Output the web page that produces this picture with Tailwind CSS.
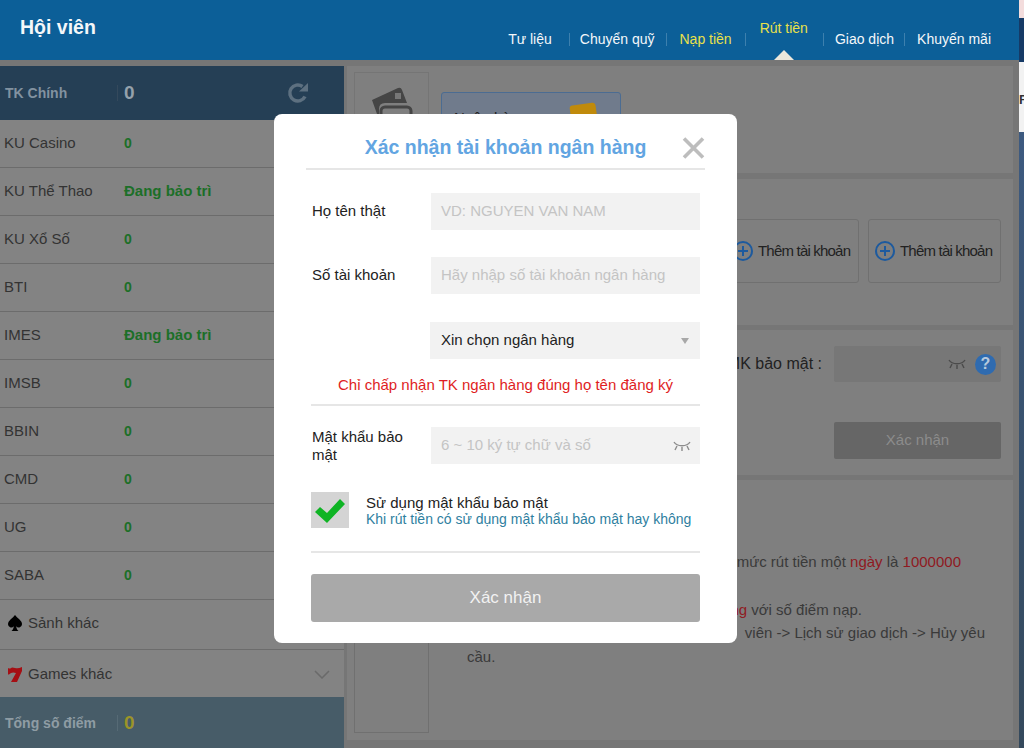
<!DOCTYPE html>
<html lang="vi">
<head>
<meta charset="utf-8">
<title>Hội viên</title>
<script src="https://cdn.jsdelivr.net/npm/@tailwindcss/browser@4"></script>
</head>
<body class="m-0 overflow-hidden">
<div class="relative flex h-[748px] w-[1024px] overflow-hidden bg-[#767676] font-['Liberation_Sans',Arial,sans-serif] text-[15px] text-[#333333]">
  <!-- page -->
  <div class="flex w-[1019px] shrink-0 flex-col">
    <header class="flex h-[60px] shrink-0 bg-[#0c5f98] text-[#f4f7fa]">
      <div class="pl-[20px] pt-[15px] text-[19.5px] font-bold leading-[24px]">Hội viên</div>
      <nav class="relative ml-auto flex h-full items-start pr-[28px] text-[14px] leading-[20px]">
        <div class="mt-[29px] flex items-center">
          <span>Tư liệu</span><i class="ml-[17px] mr-[10px] block h-[13px] w-px bg-[#3d80ae]"></i>
          <span>Chuyển quỹ</span><i class="ml-[11px] mr-[13px] block h-[13px] w-px bg-[#3d80ae]"></i>
          <span class="text-[#e9e04a]">Nạp tiền</span><i class="ml-[13px] mr-[14px] block h-[13px] w-px bg-[#3d80ae]"></i>
          <span class="relative -top-[11px] text-[#e9e04a]">Rút tiền</span><i class="ml-[15px] mr-[11px] block h-[13px] w-px bg-[#3d80ae]"></i>
          <span>Giao dịch</span><i class="ml-[10px] mr-[12px] block h-[13px] w-px bg-[#3d80ae]"></i>
          <span>Khuyến mãi</span>
        </div>
        <i class="absolute bottom-0 right-[225px] block h-0 w-0 border-x-[10px] border-b-[10px] border-x-transparent border-b-[#ece8dc]"></i>
      </nav>
    </header>
    <div class="flex min-h-0 flex-1 pt-[6px]">
      <!-- sidebar -->
      <aside class="flex w-[344px] shrink-0 flex-col bg-[#838383]">
        <div class="grid h-[54px] grid-cols-[112px_1px_1fr_auto] items-center bg-[#253f55] pl-[5px] pr-[35px]">
          <span class="text-[14px] font-bold text-[#8292a0]">TK Chính</span>
          <i class="h-[16px] w-px bg-[#34495c]"></i>
          <span class="pl-[6px] text-[19px] font-bold text-[#95a1ab]">0</span>
          <svg width="22" height="22" viewBox="0 0 22 22" fill="none" stroke="#5d7080" stroke-width="3.500" aria-hidden="true"><path d="M18 14.500A8 8 0 1 1 15.500 4.500"/><path d="M12 9.500h9V1z" fill="#5d7080" stroke="none"/></svg>
        </div>
        <div class="grid h-[48px] grid-cols-[120px_1fr] items-center border-b border-[#6c6c6c] pl-[4px]"><span>KU Casino</span><b class="text-[14px] text-[#1c6f28]">0</b></div>
        <div class="grid h-[48px] grid-cols-[120px_1fr] items-center border-b border-[#6c6c6c] pl-[4px]"><span>KU Thể Thao</span><b class="text-[15px] text-[#1c6f28]">Đang bảo trì</b></div>
        <div class="grid h-[48px] grid-cols-[120px_1fr] items-center border-b border-[#6c6c6c] pl-[4px]"><span>KU Xổ Số</span><b class="text-[14px] text-[#1c6f28]">0</b></div>
        <div class="grid h-[48px] grid-cols-[120px_1fr] items-center border-b border-[#6c6c6c] pl-[4px]"><span>BTI</span><b class="text-[14px] text-[#1c6f28]">0</b></div>
        <div class="grid h-[48px] grid-cols-[120px_1fr] items-center border-b border-[#6c6c6c] pl-[4px]"><span>IMES</span><b class="text-[15px] text-[#1c6f28]">Đang bảo trì</b></div>
        <div class="grid h-[48px] grid-cols-[120px_1fr] items-center border-b border-[#6c6c6c] pl-[4px]"><span>IMSB</span><b class="text-[14px] text-[#1c6f28]">0</b></div>
        <div class="grid h-[48px] grid-cols-[120px_1fr] items-center border-b border-[#6c6c6c] pl-[4px]"><span>BBIN</span><b class="text-[14px] text-[#1c6f28]">0</b></div>
        <div class="grid h-[48px] grid-cols-[120px_1fr] items-center border-b border-[#6c6c6c] pl-[4px]"><span>CMD</span><b class="text-[14px] text-[#1c6f28]">0</b></div>
        <div class="grid h-[48px] grid-cols-[120px_1fr] items-center border-b border-[#6c6c6c] pl-[4px]"><span>UG</span><b class="text-[14px] text-[#1c6f28]">0</b></div>
        <div class="grid h-[48px] grid-cols-[120px_1fr] items-center border-b border-[#6c6c6c] pl-[4px]"><span>SABA</span><b class="text-[14px] text-[#1c6f28]">0</b></div>
        <div class="flex h-[50px] items-center gap-[6px] border-b border-[#6c6c6c] pb-[3px] pl-[8px]">
          <svg width="14" height="16" viewBox="0 0 14 16" fill="#000" aria-hidden="true"><path d="M7 0C9 3 14 5.500 14 9a3.300 3.300 0 0 1-5.800 2.200C8.300 13 9 14.500 10.500 16h-7C5 14.500 5.700 13 5.800 11.200A3.300 3.300 0 0 1 0 9C0 5.500 5 3 7 0z"/></svg>
          <span>Sảnh khác</span>
        </div>
        <div class="flex h-[47px] items-center gap-[6px] pl-[8px] pr-[14px] pt-[2px]">
          <svg width="14" height="15" viewBox="0 0 14 15" fill="#a50f14" aria-hidden="true"><path d="M0 1q2 1 3 0t4 0 7-1v4L9 15H3l5-9Q5 5 3 6L1 7.500H0z"/></svg>
          <span>Games khác</span>
          <svg class="ml-auto" width="16" height="9" viewBox="0 0 16 9" fill="none" stroke="#6a6a6a" stroke-width="1.500" aria-hidden="true"><path d="M1 1l7 7 7-7"/></svg>
        </div>
        <div class="grid flex-1 grid-cols-[112px_1px_1fr] items-center bg-[#475c68] pl-[5px] pt-[1px]">
          <span class="text-[14px] font-bold text-[#8f9ca4]">Tổng số điểm</span>
          <i class="h-[16px] w-px bg-[#566a75]"></i>
          <span class="pl-[6px] text-[19px] font-bold text-[#9c9428]">0</span>
        </div>
      </aside>
      <!-- main -->
      <main class="ml-[3px] flex w-[666px] shrink-0 flex-col pb-[8px]">
        <section class="flex h-[107px] shrink-0 gap-[12px] bg-[#7f7f7f] pl-[7px] pt-[6px]">
          <div class="flex h-[95px] w-[75px] items-start justify-center border border-[#757575] pt-[14px]">
            <svg width="42" height="40" viewBox="0 0 42 40" aria-hidden="true"><path d="M1 13L27 1q3-1 4 2l5 13H14q-6 0-6 6v6L6 27z" fill="#454545"/><rect x="24" y="6" width="6" height="6" fill="#777"/><rect x="10" y="20" width="30" height="18" rx="4" fill="none" stroke="#454545" stroke-width="3"/></svg>
          </div>
          <div class="relative mt-[20px] h-[60px] w-[180px] overflow-hidden rounded-[3px] border border-[#4b6c92] bg-[#707b8c] pl-[12px] pt-[14px] text-[#222]">
            Ngân hàng
            <i class="absolute left-[130px] top-[11px] block h-[40px] w-[26px] rotate-[-8deg] rounded-[3px] bg-[#c08a0b]"></i>
          </div>
        </section>
        <section class="mt-[6px] flex h-[146px] shrink-0 justify-end gap-[9px] bg-[#7f7f7f] pr-[12px] pt-[40px]">
          <div class="flex h-[64px] w-[133px] items-center gap-[5px] rounded-[3px] border border-[#707070] pl-[6px] text-[15px] tracking-[-0.8px] text-[#222]">
            <svg width="20" height="20" viewBox="0 0 20 20" fill="none" stroke="#1d5a9e" stroke-width="2" aria-hidden="true"><circle cx="10" cy="10" r="9"/><path d="M10 5v10M5 10h10"/></svg>
            <span>Thêm tài khoản</span>
          </div>
          <div class="flex h-[64px] w-[133px] items-center gap-[5px] rounded-[3px] border border-[#707070] pl-[6px] text-[15px] tracking-[-0.8px] text-[#222]">
            <svg width="20" height="20" viewBox="0 0 20 20" fill="none" stroke="#1d5a9e" stroke-width="2" aria-hidden="true"><circle cx="10" cy="10" r="9"/><path d="M10 5v10M5 10h10"/></svg>
            <span>Thêm tài khoản</span>
          </div>
        </section>
        <section class="mt-[5px] flex h-[145px] shrink-0 flex-col items-end bg-[#7f7f7f] pr-[12px] pt-[16px]">
          <div class="flex items-center gap-[12px]">
            <span class="text-[16px] text-[#222]">MK bảo mật :</span>
            <div class="flex h-[36px] w-[167px] items-center justify-end gap-[9px] rounded-[2px] bg-[#777777] pr-[5px]">
              <svg width="18" height="12" viewBox="0 0 18 12" fill="none" stroke="#4b4b4b" stroke-width="1.400" aria-hidden="true"><path d="M1 2c3 5 13 5 16 0M9 7v4M4 6l-2 4M14 6l2 4"/></svg>
              <span class="flex h-[21px] w-[21px] items-center justify-center rounded-full bg-[#2f6bb0] text-[16px] font-bold leading-none text-[#b8c9dc]">?</span>
            </div>
          </div>
          <div class="mt-[40px] flex h-[37px] w-[167px] items-center justify-center rounded-[2px] bg-[#666666] text-[#8c8c8c]">Xác nhận</div>
        </section>
        <section class="relative mt-[5px] flex min-h-0 flex-1 bg-[#7f7f7f] pl-[7px] pt-[7px] text-[15px] leading-[24px] text-[#3a3a3a]">
          <div class="h-[246px] w-[75px] shrink-0 border border-[#707070]"></div>
          <div class="absolute right-[52px] top-[70px] whitespace-nowrap text-right">Hạn mức rút tiền một <span class="text-[#8f1a22]">ngày</span> là <span class="text-[#8f1a22]">1000000</span></div>
          <div class="absolute right-[151px] top-[118px] whitespace-nowrap text-right"><span class="text-[#8f1a22]">Đúng</span> với số điểm nạp.</div>
          <div class="absolute right-[28px] top-[141px] whitespace-nowrap text-right">Hội&nbsp;&nbsp;viên -&gt; Lịch sử giao dịch -&gt; Hủy yêu</div>
          <div class="absolute left-[120px] top-[165px]">cầu.</div>
        </section>
      </main>
    </div>
  </div>
  <!-- neighbouring window strip -->
  <div class="flex flex-1 flex-col">
    <div class="h-[18px] bg-[#f3dcdc]"></div>
    <div class="h-[44px] bg-[#163a66]"></div>
    <div class="h-[70px] bg-[#f2f2f2] pt-[31px] text-[13px] font-bold leading-none text-[#333]">F</div>
    <div class="flex-1 bg-gradient-to-b from-[#3d5a80] to-[#34495c]"></div>
  </div>

  <!-- modal -->
  <div class="absolute left-[274px] top-[114px] h-[529px] w-[463px] rounded-[8px] bg-white text-[#222]">
    <div class="relative mx-[32px] flex h-[56px] items-center justify-center border-b-2 border-[#e6e6e6] pt-[13px] text-[19.5px] font-bold text-[#62a5e2]">
      Xác nhận tài khoản ngân hàng
      <svg class="absolute right-0 top-[23px]" width="23" height="22" viewBox="0 0 23 22" fill="none" stroke="#bdbdbd" stroke-width="3.600" aria-hidden="true"><path d="M2 1.500l19 19M21 1.500l-19 19"/></svg>
    </div>
    <div class="px-[37px]">
      <div class="mt-[23px] flex h-[37px] items-center">
        <span class="w-[120px] pl-[1px]">Họ tên thật</span>
        <div class="flex h-full flex-1 items-center bg-[#f2f2f2] pl-[10px] text-[#c4c4c4]">VD: NGUYEN VAN NAM</div>
      </div>
      <div class="mt-[27px] flex h-[37px] items-center">
        <span class="w-[120px] pl-[1px]">Số tài khoản</span>
        <div class="flex h-full flex-1 items-center bg-[#f2f2f2] pl-[10px] text-[#c4c4c4]">Hãy nhập số tài khoản ngân hàng</div>
      </div>
      <div class="mt-[28px] flex h-[37px] items-center pl-[119px]">
        <div class="flex h-full flex-1 items-center justify-between bg-[#f2f2f2] pl-[11px] pr-[11px] text-[#222]">
          Xin chọn ngân hàng
          <i class="block h-0 w-0 border-x-[4px] border-t-[6px] border-x-transparent border-t-[#a8a8a8]"></i>
        </div>
      </div>
      <p class="mt-[16px] text-center text-[15px] leading-[20px] text-[#e01d23]">Chỉ chấp nhận TK ngân hàng đúng họ tên đăng ký</p>
      <div class="mt-[9px] h-[2px] bg-[#e6e6e6]"></div>
      <div class="mt-[21px] flex h-[37px] items-center">
        <span class="w-[120px] pl-[1px] leading-[18px]">Mật khẩu bảo mật</span>
        <div class="flex h-full flex-1 items-center justify-between bg-[#f2f2f2] pl-[10px] pr-[9px] text-[#c4c4c4]">
          6 ~ 10 ký tự chữ và số
          <svg width="18" height="12" viewBox="0 0 18 12" fill="none" stroke="#8c8c8c" stroke-width="1.400" aria-hidden="true"><path d="M1 2c3 5 13 5 16 0M9 7v4M4 6l-2 4M14 6l2 4"/></svg>
        </div>
      </div>
      <div class="mt-[28px] flex h-[36px] items-center gap-[17px]">
        <div class="flex h-[36px] w-[38px] items-center justify-center bg-[#d4d4d4]">
          <svg width="32" height="27" viewBox="0 0 32 27" aria-hidden="true"><path d="M1 15l5-5 7 6L26 2l5 5-18 19z" fill="#0fb424"/></svg>
        </div>
        <div>
          <div class="leading-[17px] text-[#222]">Sử dụng mật khẩu bảo mật</div>
          <div class="text-[14px] leading-[16px] text-[#2f7f9f]">Khi rút tiền có sử dụng mật khẩu bảo mật hay không</div>
        </div>
      </div>
      <div class="mt-[23px] h-[2px] bg-[#e6e6e6]"></div>
      <div class="mt-[21px] flex h-[48px] items-center justify-center rounded-[3px] bg-[#a9a9a9] text-[17px] text-[#f2f2f2]">Xác nhận</div>
    </div>
  </div>
</div>
</body>
</html>
